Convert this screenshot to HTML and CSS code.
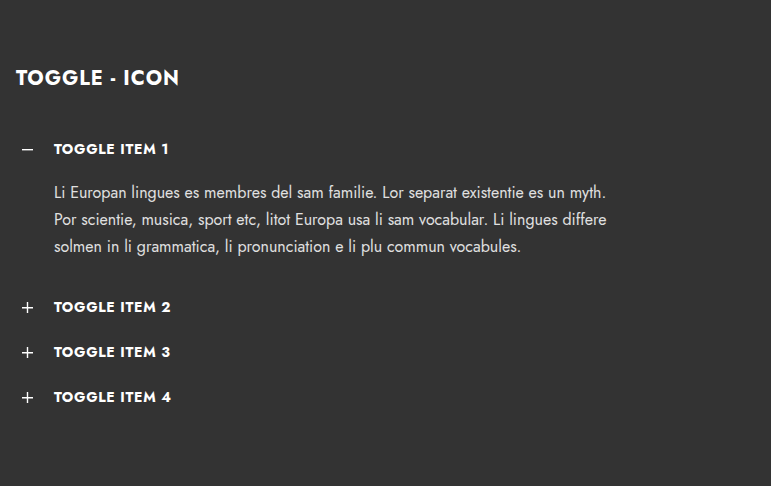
FILE: index.html
```html
<!DOCTYPE html>
<html lang="en">
<head>
<meta charset="utf-8">
<title>Toggle - Icon</title>
<link rel="stylesheet" href="styles.css">
</head>
<body>
<main class="section">
  <h2 class="title">Toggle - Icon</h2>
  <div class="toggles">
    <section class="item">
      <button class="head" type="button" aria-expanded="true"><svg class="icon" viewBox="0 0 11 11" aria-hidden="true"><path d="M0 5.7H11"/></svg>Toggle item 1</button>
      <p class="text">Li Europan lingues es membres del sam familie. Lor separat existentie es un myth. Por scientie, musica, sport etc, litot Europa usa li sam vocabular. Li lingues differe solmen in li grammatica, li pronunciation e li plu commun vocabules.</p>
    </section>
    <section class="item">
      <button class="head" type="button" aria-expanded="false"><svg class="icon" viewBox="0 0 11 11" aria-hidden="true"><path d="M0 5.7H11M5.5 0V11"/></svg>Toggle item 2</button>
    </section>
    <section class="item">
      <button class="head" type="button" aria-expanded="false"><svg class="icon" viewBox="0 0 11 11" aria-hidden="true"><path d="M0 5.7H11M5.5 0V11"/></svg>Toggle item 3</button>
    </section>
    <section class="item">
      <button class="head" type="button" aria-expanded="false"><svg class="icon" viewBox="0 0 11 11" aria-hidden="true"><path d="M0 5.7H11M5.5 0V11"/></svg>Toggle item 4</button>
    </section>
  </div>
</main>
</body>
</html>
```
FILE: styles.css
```css
body {
  margin: 0;
  background: #333;
  color: #fff;
  font-family: Jost, Lato, sans-serif;
}
.section {
  max-width: 600px;
  padding: 65px 16px;
}
.title {
  margin: 0 0 41px;
  font-size: 20px;
  line-height: 28px;
  font-weight: 700;
  letter-spacing: 0.05em;
  text-transform: uppercase;
}
.toggles {
  display: grid;
  gap: 15px;
}
.head {
  display: flex;
  align-items: center;
  gap: 21px;
  width: 100%;
  padding: 0 0 0 6px;
  border: 0;
  background: none;
  color: inherit;
  font: 700 14px/30px Jost, Lato, sans-serif;
  letter-spacing: 0.05em;
  text-transform: uppercase;
  text-align: left;
  cursor: pointer;
}
.icon {
  flex: none;
  width: 11px;
  height: 11px;
  stroke: #fff;
  stroke-width: 1.4;
}
.text {
  margin: 15px 0 17px;
  padding-left: 38px;
  color: #e0e0e0;
  font-size: 16px;
  line-height: 27px;
}
```
